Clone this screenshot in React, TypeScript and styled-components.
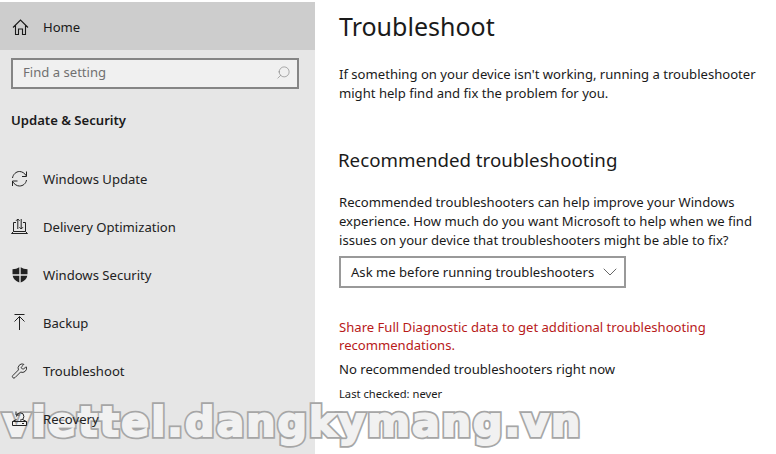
import React from "react";
import styled, { createGlobalStyle } from "styled-components";
import { Search, Wrench, ChevronDown } from "lucide-react";

const GlobalStyle = createGlobalStyle`
    html, body {
        margin: 0;
        padding: 0;
        background: #ffffff;
        overflow: hidden;
    }
    body {
        font-family: "Noto Sans", "Open Sans", sans-serif;
        color: #1a1a1a;
    }
`;

const Page = styled.div`
    position: relative;
    display: flex;
    width: 776px;
    height: 454px;
    overflow: hidden;
`;

const Sidebar = styled.nav`
    width: 315px;
    flex-shrink: 0;
    padding-top: 2px;
    background: linear-gradient(#ffffff 2px, #e6e6e6 2px);
`;

const HomeRow = styled.div`
    display: flex;
    align-items: center;
    gap: 14px;
    box-sizing: border-box;
    height: 48px;
    padding: 1px 0 0 12px;
    background: #cdcdcd;
    font-size: 13.1px;
`;

const SearchBox = styled.div`
    display: flex;
    align-items: center;
    justify-content: space-between;
    box-sizing: border-box;
    width: 288px;
    height: 31px;
    margin: 8px 0 0 11px;
    padding: 0 6px 3px 10px;
    border: 2px solid #858585;
    background: #f0f0f0;
    color: #707070;
    font-size: 13.1px;
`;

const SectionTitle = styled.h2`
    margin: 21px 0 0 11px;
    font-size: 13.1px;
    line-height: 20px;
    font-weight: 600;
    color: #1a1a1a;
`;

const NavList = styled.div`
    display: flex;
    flex-direction: column;
    gap: 16px;
    margin-top: 33px;
`;

const NavRow = styled.div`
    position: relative;
    z-index: 2;
    display: flex;
    align-items: center;
    gap: 15px;
    height: 32px;
    padding-left: 11px;
    font-size: 13.1px;
    color: #222222;
`;

const IconSlot = styled.span`
    display: flex;
    align-items: center;
    justify-content: center;
    width: 17px;
    height: 18px;
    color: #222222;
`;

const Content = styled.main`
    flex: 1;
    padding-left: 24px;
`;

const PageTitle = styled.h1`
    margin: 8px 0 0;
    font-size: 25px;
    line-height: 36px;
    font-weight: 400;
    color: #1a1a1a;
`;

const Body = styled.p<{ $top: number; $color?: string; $leading?: number }>`
    margin: ${(p) => p.$top}px 0 0;
    font-size: 13.1px;
    line-height: ${(p) => p.$leading ?? 19}px;
    color: ${(p) => p.$color ?? "#1a1a1a"};
    white-space: nowrap;
`;

const SubTitle = styled.h2`
    margin: 43px 0 0 -1px;
    font-size: 18.7px;
    line-height: 28px;
    font-weight: 400;
    color: #1a1a1a;
`;

const Select = styled.div`
    display: flex;
    align-items: center;
    justify-content: space-between;
    box-sizing: border-box;
    width: 287px;
    height: 32px;
    margin-top: 6px;
    padding: 0 2px 0 10px;
    border: 2px solid #999999;
    font-size: 13.1px;
    color: #1a1a1a;
    white-space: nowrap;
`;

const Small = styled.p`
    position: relative;
    z-index: 2;
    margin: 7px 0 0;
    font-size: 11.2px;
    line-height: 16px;
    color: #1a1a1a;
`;

const Watermark = styled.div`
    position: absolute;
    z-index: 1;
    left: 3px;
    top: 395px;
    font-family: "DejaVu Sans", sans-serif;
    font-size: 41px;
    line-height: 54px;
    font-weight: 700;
    letter-spacing: 2.1px;
    white-space: nowrap;
    color: #a6a6a6;
    -webkit-text-stroke: 5.5px #a6a6a6;

    &::after {
        content: attr(data-text);
        position: absolute;
        left: 0;
        top: 0;
        color: #f1f1f1;
        -webkit-text-stroke: 2px #f1f1f1;
    }
`;

const HomeIcon = () => (
    <svg width="17" height="18" viewBox="0 0 17 18" fill="none" stroke="currentColor" strokeWidth="1.1">
        <path d="M1 9.500L8.500 2L16 9.500M3.500 7.500V16.500H6.500V11H10.500V16.500H13.500V7.500" />
    </svg>
);

const SyncIcon = () => (
    <svg width="17" height="18" viewBox="0 0 17 18" fill="none" stroke="currentColor" strokeWidth="1">
        <path d="M1.500 8C2 4.500 5 1.500 8.500 1.500C11 1.500 13.500 3 15.500 6M15.500 1.500V6.500H11" />
        <path d="M15.500 10C15 13.500 12 16 8.500 16C6 16 3.500 14.500 1.500 11.500M1.500 16V11H6.500" />
    </svg>
);

const DeliveryIcon = () => (
    <svg width="17" height="18" viewBox="0 0 17 18" fill="none" stroke="currentColor" strokeWidth="1">
        <path d="M2.500 13.500V4.500H5M14.500 13.500V4.500H12M0.500 15.500L2.500 13.500H14.500L16.500 15.500Z" />
        <path d="M6.800 11V1M5 2.800L6.800 1L8.600 2.800M10.200 1V11M8.400 9.200L10.200 11L12 9.200" />
    </svg>
);

const ShieldIcon = () => (
    <svg width="16" height="18" viewBox="0 0 16 18" fill="currentColor">
        <path d="M7.300 1.200C5.500 2.500 3 3.200.5 3.200V8.300H7.300ZM8.700 1.200V8.300H15.500V3.200C13 3.200 10.500 2.500 8.700 1.200ZM.7 9.700C1.300 12.800 3.500 15 7.300 16.500V9.700ZM8.700 9.700V16.500C12.500 15 14.700 12.800 15.300 9.700Z" />
    </svg>
);

const BackupIcon = () => (
    <svg width="17" height="18" viewBox="0 0 17 18" fill="none" stroke="currentColor" strokeWidth="1">
        <path d="M3.500 .5H13.500M8.500 16V2.500M3.500 7.500L8.500 2.500L13.500 7.500" />
    </svg>
);

const RecoveryIcon = () => (
    <svg width="17" height="18" viewBox="0 0 17 18" fill="none" stroke="currentColor" strokeWidth="1">
        <path d="M5.500 6.500A3.700 3.700 0 1 1 9 10.200M5 1.500V5H8.500" />
        <path d="M5.500 9.500L1.500 11.500V15.500H15.500V11.500L11.500 9.500M1.500 11.500H15.500M11 13.500H13" />
    </svg>
);

const items = [
    { label: "Windows Update", icon: <SyncIcon /> },
    { label: "Delivery Optimization", icon: <DeliveryIcon /> },
    { label: "Windows Security", icon: <ShieldIcon /> },
    { label: "Backup", icon: <BackupIcon /> },
    { label: "Troubleshoot", icon: <Wrench size={18} strokeWidth={1.3} /> },
    { label: "Recovery", icon: <RecoveryIcon /> },
];

const watermarkText = "viettel.dangkymang.vn";

const App: React.FC = () => {
    return (
        <Page>
            <GlobalStyle />
            <Sidebar>
                <HomeRow>
                    <HomeIcon />
                    <span>Home</span>
                </HomeRow>
                <SearchBox>
                    <span>Find a setting</span>
                    <Search size={15} strokeWidth={0.9} color="#707070" style={{ transform: "scaleX(-1)" }} />
                </SearchBox>
                <SectionTitle>Update &amp; Security</SectionTitle>
                <NavList>
                    {items.map((item) => (
                        <NavRow key={item.label}>
                            <IconSlot>{item.icon}</IconSlot>
                            <span>{item.label}</span>
                        </NavRow>
                    ))}
                </NavList>
            </Sidebar>
            <Content>
                <PageTitle>Troubleshoot</PageTitle>
                <Body $top={21}>
                    If something on your device isn't working, running a troubleshooter
                    <br />
                    might help find and fix the problem for you.
                </Body>
                <SubTitle>Recommended troubleshooting</SubTitle>
                <Body $top={19}>
                    Recommended troubleshooters can help improve your Windows
                    <br />
                    experience. How much do you want Microsoft to help when we find
                    <br />
                    issues on your device that troubleshooters might be able to fix?
                </Body>
                <Select>
                    <span>Ask me before running troubleshooters</span>
                    <ChevronDown size={24} strokeWidth={0.9} color="#555555" />
                </Select>
                <Body $top={30} $color="#b81a1a" $leading={18}>
                    Share Full Diagnostic data to get additional troubleshooting
                    <br />
                    recommendations.
                </Body>
                <Body $top={6}>No recommended troubleshooters right now</Body>
                <Small>Last checked: never</Small>
            </Content>
            <Watermark data-text={watermarkText}>{watermarkText}</Watermark>
        </Page>
    );
};
export default App;
